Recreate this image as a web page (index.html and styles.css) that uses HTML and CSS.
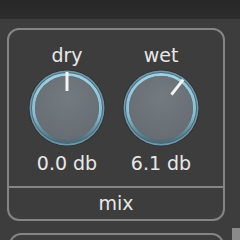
FILE: index.html
```html
<!DOCTYPE html>
<html>
<head>
<meta charset="utf-8">
<link rel="stylesheet" href="styles.css">
</head>
<body>
<div class="topbar"></div>
<div class="stage">
  <div class="content">
    <div class="panel">
      <div class="knobs">
        <div class="knob-col">
          <div class="label">dry</div>
          <svg class="knob" width="78" height="78" viewBox="0 0 78 78">
            <defs>
              <linearGradient id="ringA" x1="0" y1="0" x2="0" y2="1">
                <stop offset="0" stop-color="#9fd0e2"/>
                <stop offset="0.6" stop-color="#86bfd4"/>
                <stop offset="1" stop-color="#4d6b78"/>
              </linearGradient>
              <radialGradient id="bodyA" cx="0.5" cy="0.35" r="0.7">
                <stop offset="0" stop-color="#737a80"/>
                <stop offset="1" stop-color="#666c71"/>
              </radialGradient>
            </defs>
            <circle cx="39" cy="39" r="38.5" fill="#2f3438"/>
            <circle cx="39" cy="39" r="37.5" fill="#6f98a8"/>
            <circle cx="39" cy="39" r="36" fill="#4e6874"/>
            <circle cx="39" cy="39" r="33.5" fill="none" stroke="url(#ringA)" stroke-width="3"/>
            <circle cx="39" cy="39" r="32" fill="url(#bodyA)"/>
            <line x1="39" y1="3" x2="39" y2="22" stroke="#f4f4f4" stroke-width="3"/>
          </svg>
          <div class="value">0.0 db</div>
        </div>
        <div class="knob-col">
          <div class="label">wet</div>
          <svg class="knob" width="78" height="78" viewBox="0 0 78 78">
            <circle cx="39" cy="39" r="38.5" fill="#2f3438"/>
            <circle cx="39" cy="39" r="37.5" fill="#6f98a8"/>
            <circle cx="39" cy="39" r="36" fill="#4e6874"/>
            <circle cx="39" cy="39" r="33.5" fill="none" stroke="url(#ringA)" stroke-width="3"/>
            <circle cx="39" cy="39" r="32" fill="url(#bodyA)"/>
            <line x1="39" y1="3" x2="39" y2="22" stroke="#f4f4f4" stroke-width="3" transform="rotate(38 39 39)"/>
          </svg>
          <div class="value">6.1 db</div>
        </div>
      </div>
      <div class="footer">mix</div>
    </div>
    <div class="panel2"></div>
  </div>
  <div class="rail"><div class="thumb"></div></div>
</div>
</body>
</html>
```
FILE: styles.css
```css
html, body {
  margin: 0;
  padding: 0;
  background: #3d3d3d;
  width: 240px;
  height: 240px;
  overflow: hidden;
  font-family: "DejaVu Sans", Verdana, sans-serif;
  color: #e8e8e8;
}
.topbar {
  height: 19px;
  background: linear-gradient(#262626, #2e2e2e);
}
.stage {
  display: flex;
}
.content {
  width: 232px;
}
.panel {
  margin: 9px 0 0 7px;
  width: 214px;
  height: 189px;
  border: 2px solid #858585;
  border-radius: 12px;
  display: flex;
  flex-direction: column;
}
.knobs {
  display: flex;
  padding: 14px 0 0 11px;
  height: 142px;
}
.knob-col {
  width: 94px;
  display: flex;
  flex-direction: column;
  align-items: center;
}
.label, .value, .footer {
  font-size: 19px;
  line-height: 22px;
  white-space: nowrap;
}
.knob {
  display: block;
  margin-top: 3px;
}
.value {
  margin-top: 5px;
}
.footer {
  border-top: 2px solid #858585;
  flex: 1;
  display: flex;
  align-items: center;
  justify-content: center;
  padding-bottom: 1px;
}
.panel2 {
  margin: 12px 0 0 9px;
  width: 211px;
  height: 40px;
  border: 2px solid #858585;
  border-radius: 12px;
}
.rail {
  flex: 1;
}
.thumb {
  margin-top: 209px;
  height: 20px;
  background: #8a8a8a;
}
```
